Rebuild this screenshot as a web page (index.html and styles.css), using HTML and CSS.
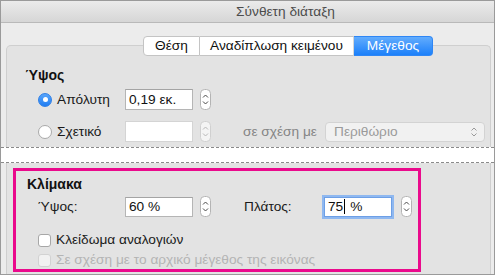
FILE: index.html
```html
<!DOCTYPE html>
<html>
<head>
    <title>Σύνθετη διάταξη</title>
    <link rel="stylesheet" href="styles.css">
</head>
<body>
    <div class="window">
        <div class="titlebar">Σύνθετη διάταξη</div>

        <div class="content">
            <!-- Segmented tabs -->
            <div class="tabs">
                <div class="tab tab-pos">Θέση</div>
                <div class="tab tab-wrap">Αναδίπλωση κειμένου</div>
                <div class="tab tab-size active">Μέγεθος</div>
            </div>

            <div class="group group-top">
                <div class="heading">Ύψος</div>
                <div class="row first">
                    <div class="choice">
                        <span class="radio on"></span>
                        <span>Απόλυτη</span>
                    </div>
                    <div class="field">0,19 εκ.</div>
                    <svg class="stepper" width="11" height="21" viewBox="0 0 11 21">
                        <rect x="0.5" y="0.5" width="10" height="20" rx="4" fill="#fff" stroke="#b4b4b4"/>
                        <path d="M3 8.5 L5.5 6 L8 8.5 M3 12.5 L5.5 15 L8 12.5" fill="none" stroke="#4a4a4a" stroke-width="1"/>
                    </svg>
                </div>
                <div class="row second">
                    <div class="choice">
                        <span class="radio"></span>
                        <span>Σχετικό</span>
                    </div>
                    <div class="field"></div>
                    <svg class="stepper" width="11" height="21" viewBox="0 0 11 21">
                        <rect x="0.5" y="0.5" width="10" height="20" rx="4" fill="#f4f4f4" stroke="#d0d0d0"/>
                        <path d="M3 8.5 L5.5 6 L8 8.5 M3 12.5 L5.5 15 L8 12.5" fill="none" stroke="#b8b8b8" stroke-width="1"/>
                    </svg>
                    <span class="relative-label">σε σχέση με</span>
                    <div class="popup">
                        <span>Περιθώριο</span>
                        <svg width="8" height="12" viewBox="0 0 8 12">
                            <path d="M1.5 4.5 L4 2 L6.5 4.5 M1.5 7.5 L4 10 L6.5 7.5" fill="none" stroke="#9a9a9a" stroke-width="1"/>
                        </svg>
                    </div>
                </div>
            </div>

            <!-- Cut mark between the two parts of the dialog -->
            <div class="cut"></div>

            <div class="group group-bottom">
                <div class="highlight">
                    <div class="heading">Κλίμακα</div>
                    <div class="row scale">
                        <span class="label">Ύψος:</span>
                        <div class="field small">60 %</div>
                        <svg class="stepper" width="11" height="21" viewBox="0 0 11 21">
                            <rect x="0.5" y="0.5" width="10" height="20" rx="4" fill="#fff" stroke="#b4b4b4"/>
                            <path d="M3 8.5 L5.5 6 L8 8.5 M3 12.5 L5.5 15 L8 12.5" fill="none" stroke="#4a4a4a" stroke-width="1"/>
                        </svg>
                        <span class="label label-width">Πλάτος:</span>
                        <div class="field small focused">75<span class="caret"></span>%</div>
                        <svg class="stepper stepper-width" width="11" height="21" viewBox="0 0 11 21">
                            <rect x="0.5" y="0.5" width="10" height="20" rx="4" fill="#fff" stroke="#b4b4b4"/>
                            <path d="M3 8.5 L5.5 6 L8 8.5 M3 12.5 L5.5 15 L8 12.5" fill="none" stroke="#4a4a4a" stroke-width="1"/>
                        </svg>
                    </div>
                    <div class="check-row lock">
                        <span class="checkbox"></span>
                        <span>Κλείδωμα αναλογιών</span>
                    </div>
                    <div class="check-row disabled">
                        <span class="checkbox"></span>
                        <span>Σε σχέση με το αρχικό μέγεθος της εικόνας</span>
                    </div>
                </div>
            </div>
        </div>
    </div>
</body>
</html>
```

FILE: styles.css
```css
/* Dialog window look */
body {
    margin: 0;
    background: #fff;
    font-family: "Liberation Sans", Arial, sans-serif;
    font-size: 13.7px;
    color: #1a1a1a;
    overflow: hidden;
}

.window {
    width: 495px;
    height: 275px;
    box-sizing: border-box;
    border: 1px solid #9a9a9a;
    background: #ececec;
    display: flex;
    flex-direction: column;
    overflow: hidden;
}

.titlebar {
    height: 21px;
    line-height: 21px;
    border-bottom: 1px solid #b9b9b9;
    background: linear-gradient(#ebebeb, #d6d6d6);
    color: #4c4c4c;
    text-align: center;
    padding-left: 76px;
}

.content {
    flex: 1;
    display: flex;
    flex-direction: column;
    padding-top: 13px;
}

/* Segmented control */
.tabs {
    position: relative;
    z-index: 1;
    display: flex;
    margin-left: 142px;
    height: 20px;
}

.tab {
    box-sizing: border-box;
    height: 20px;
    line-height: 18px;
    text-align: center;
    background: #fff;
    border: 1px solid #c4c4c4;
    border-left: none;
    color: #111;
}

.tab-pos {
    width: 57px;
    border-left: 1px solid #c4c4c4;
    border-radius: 4px 0 0 4px;
}

.tab-wrap {
    width: 154px;
    border-right-color: #d6d6d6;
}

.tab-size {
    width: 79px;
    border-radius: 0 4px 4px 0;
}

.tab.active {
    background: linear-gradient(#62acfd, #1c80fa);
    border-color: #2e86f5;
    color: #fff;
}

/* Group box */
.group {
    background: #e3e3e3;
    margin: 0 3px 0 5px;
    border: 1px solid #cfcfcf;
}

.group-top {
    margin-top: -11px;
    border-bottom: none;
    border-radius: 5px 5px 0 0;
    padding: 21px 0 5px 18px;
}

.heading {
    font-weight: bold;
    font-size: 14px;
    line-height: 16px;
    color: #111;
}

.row {
    display: flex;
    align-items: center;
    margin-left: 13px;
}

.row.first {
    margin-top: 6px;
}

.row.second {
    margin-top: 11px;
}

.choice {
    width: 87px;
    display: flex;
    align-items: center;
    gap: 5px;
}

.radio {
    width: 14px;
    height: 14px;
    box-sizing: border-box;
    border-radius: 50%;
    border: 1px solid #a9a9a9;
    background: #fff;
    display: flex;
    align-items: center;
    justify-content: center;
}

.radio.on {
    border-color: #2f7fe6;
    background: linear-gradient(#5aa6fb, #1f7df2);
}

.radio.on::after {
    content: "";
    width: 5px;
    height: 5px;
    border-radius: 50%;
    background: #fff;
}

.field {
    box-sizing: border-box;
    width: 68px;
    height: 21px;
    line-height: 19px;
    padding-left: 3px;
    background: #fff;
    border: 1px solid #b5b5b5;
    border-top-color: #a4a4a4;
    color: #111;
    white-space: nowrap;
}

.second .field {
    border-color: #d4d4d4;
}

.stepper {
    display: block;
    margin-left: 7px;
}

.relative-label {
    margin-left: 32px;
    width: 82px;
    color: #858585;
}

.popup {
    box-sizing: border-box;
    width: 160px;
    height: 20px;
    display: flex;
    align-items: center;
    justify-content: space-between;
    padding: 0 6px 0 8px;
    background: #f1f1f1;
    border: 1px solid #d3d3d3;
    border-radius: 4px;
    color: #9a9a9a;
}

.popup svg {
    display: block;
}

/* Cut between top and bottom part */
.cut {
    height: 14px;
    background: #fff;
    border-top: 1px dashed #8a8a8a;
    border-bottom: 1px dashed #8a8a8a;
}

.group-bottom {
    flex: 1;
    border-top: none;
    border-bottom: none;
    padding: 5px 0 0 6px;
}

/* Pink highlight round the scale section */
.highlight {
    box-sizing: border-box;
    width: 408px;
    height: 104px;
    border: 3px solid #ea0a8c;
    padding: 5px 0 0 11px;
}

.row.scale {
    margin-left: 11px;
    margin-top: 4px;
}

.label {
    width: 87px;
}

.label-width {
    width: 80px;
    margin-left: 33px;
}

.field.small {
    height: 20px;
    line-height: 18px;
    padding-left: 3px;
}

.field.focused {
    border-color: #6d9fe6;
    box-shadow: 0 0 0 2px #8fb8f0;
}

.caret {
    display: inline-block;
    width: 1px;
    height: 15px;
    background: #000;
    vertical-align: -3px;
    margin: 0 5px 0 1px;
}

.stepper-width {
    margin-left: 9px;
}

.check-row {
    display: flex;
    align-items: center;
    gap: 5px;
    margin-left: 11px;
    line-height: 16px;
}

.check-row.lock {
    margin-top: 15px;
}

.check-row.disabled {
    margin-top: 4px;
    color: #b4b4b4;
}

.checkbox {
    width: 13px;
    height: 13px;
    box-sizing: border-box;
    border: 1px solid #a7a7a7;
    border-radius: 3px;
    background: #fff;
}

.disabled .checkbox {
    border-color: #d2d2d2;
    background: #f1f1f1;
}
```
